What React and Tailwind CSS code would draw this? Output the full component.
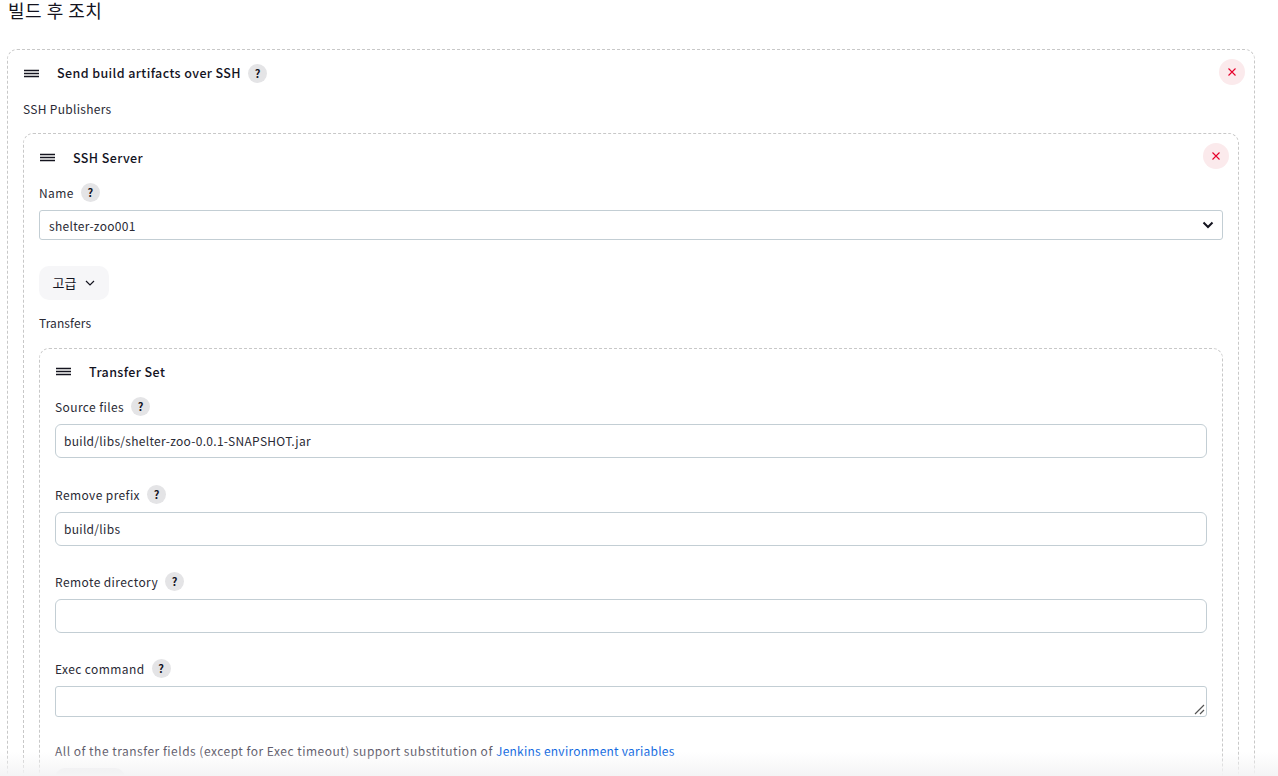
const FONT = "font-['Noto_Sans_CJK_KR','Noto_Sans',sans-serif]";

function Handle() {
  return (
    <svg width="15" height="9" viewBox="0 0 15 9" className="shrink-0 ml-px">
      <path d="M0 1.5H15M0 4.5H15M0 7.5H15" stroke="#14141f" strokeWidth="1.3" fill="none" />
    </svg>
  );
}

function Help() {
  return (
    <span className="w-[19px] h-[19px] rounded-full bg-[#e4e4e6] text-[#14141f] text-[11px] font-bold flex items-center justify-center shrink-0">
      ?
    </span>
  );
}

function CloseButton() {
  return (
    <button className="absolute top-[9px] right-[9px] w-[26px] h-[26px] rounded-full bg-[#fbeaec] flex items-center justify-center">
      <svg width="10" height="10" viewBox="0 0 10 10">
        <path d="M1.5 1.5L8.5 8.5M8.5 1.5L1.5 8.5" stroke="#e6002a" strokeWidth="1.1" fill="none" />
      </svg>
    </button>
  );
}

function Label({ text, help }) {
  return (
    <div className="flex items-center gap-[7px] h-[19px]">
      <span className="text-[12px] tracking-[0.4px] text-[#2a2a35]">{text}</span>
      {help && <Help />}
    </div>
  );
}

function Field({ label, value, className }) {
  return (
    <div className={className}>
      <Label text={label} help />
      <div className="mt-[8px] h-[34px] rounded-md border border-[#c3ced4] px-2 flex items-center text-[12px] tracking-[0.3px] text-[#2a2a35]">
        {value}
      </div>
    </div>
  );
}

export default function App() {
  const title = "ml-[18px] text-[12.5px] tracking-[0.4px] font-medium";

  return (
    <div className={`${FONT} relative h-screen overflow-hidden bg-white pl-[7px] pr-[23px] text-[#14141f]`}>
      <h2 className="pl-px text-[18px] tracking-[0.5px] leading-[21px] h-[49px]">빌드 후 조치</h2>

      <section className="relative rounded-[10px] border border-dashed border-[#c8c8c8] px-[15px] pt-[14px]">
        <CloseButton />
        <div className="flex items-center h-[19px]">
          <Handle />
          <span className={`${title} pb-px`}>Send build artifacts over SSH</span>
          <span className="ml-[7px]"><Help /></span>
        </div>
        <div className="mt-[16px] text-[12px] tracking-[0.3px] leading-[19px] text-[#2a2a35]">SSH Publishers</div>

        <section className="relative mt-[15px] rounded-[10px] border border-dashed border-[#c8c8c8] px-[15px] pt-[14px]">
          <CloseButton />
          <div className="flex items-center h-[19px]">
            <Handle />
            <span className={`${title} pt-px`}>SSH Server</span>
          </div>
          <div className="mt-[16px]"><Label text="Name" help /></div>
          <div className="mt-[8px] h-[30px] rounded-[3px] border border-[#c3ced4] pl-[9px] pr-[8px] flex items-center justify-between text-[12px] tracking-[0.3px] text-[#2a2a35]">
            <span className="pt-px">shelter-zoo001</span>
            <svg width="12" height="8" viewBox="0 0 12 8">
              <path d="M1.5 1.5L6 6L10.5 1.5" stroke="#14141f" strokeWidth="2" fill="none" />
            </svg>
          </div>
          <button className="mt-[26px] w-[70px] h-[34px] rounded-[10px] bg-[#f6f6f8] flex items-center justify-center gap-[9px] text-[13px]">
            고급
            <svg width="10" height="6" viewBox="0 0 10 6">
              <path d="M1 1L5 5L9 1" stroke="#14141f" strokeWidth="1.2" fill="none" />
            </svg>
          </button>
          <div className="mt-[13px] text-[12px] tracking-[0.1px] leading-[19px] text-[#2a2a35]">Transfers</div>

          <section className="mt-[16px] rounded-[10px] border border-dashed border-[#c8c8c8] px-[15px] pt-[13px]">
            <div className="flex items-center h-[19px]">
              <Handle />
              <span className={`${title} pt-px`}>Transfer Set</span>
            </div>
            <Field className="mt-[16px]" label="Source files" value="build/libs/shelter-zoo-0.0.1-SNAPSHOT.jar" />
            <Field className="mt-[27px]" label="Remove prefix" value="build/libs" />
            <Field className="mt-[26px]" label="Remote directory" value="" />
            <div className="mt-[26px]">
              <Label text="Exec command" help />
              <div className="relative mt-[8px] h-[31px] rounded-[3px] border border-[#c3ced4]">
                <svg width="11" height="11" viewBox="0 0 11 11" className="absolute right-[1px] bottom-[1px]">
                  <path d="M1 10L10 1M6 10L10 6" stroke="#555" strokeWidth="1.2" fill="none" />
                </svg>
              </div>
            </div>
            <p className="mt-[24px] text-[12px] tracking-[0.49px] leading-[19px] text-[#5f5d6c]">
              All of the transfer fields (except for Exec timeout) support substitution of{" "}
              <span className="tracking-[0.25px] text-[#1269e0]">Jenkins environment variables</span>
            </p>
            <div className="mt-[8px] w-[70px] h-[34px] rounded-[10px] bg-[#ececef]" />
            <div className="h-[40px]" />
          </section>
          <div className="h-[40px]" />
        </section>
        <div className="h-[40px]" />
      </section>

      <div className="absolute left-0 right-0 bottom-0 h-[24px] bg-gradient-to-b from-transparent to-[#f4f4f5] pointer-events-none" />
    </div>
  );
}
